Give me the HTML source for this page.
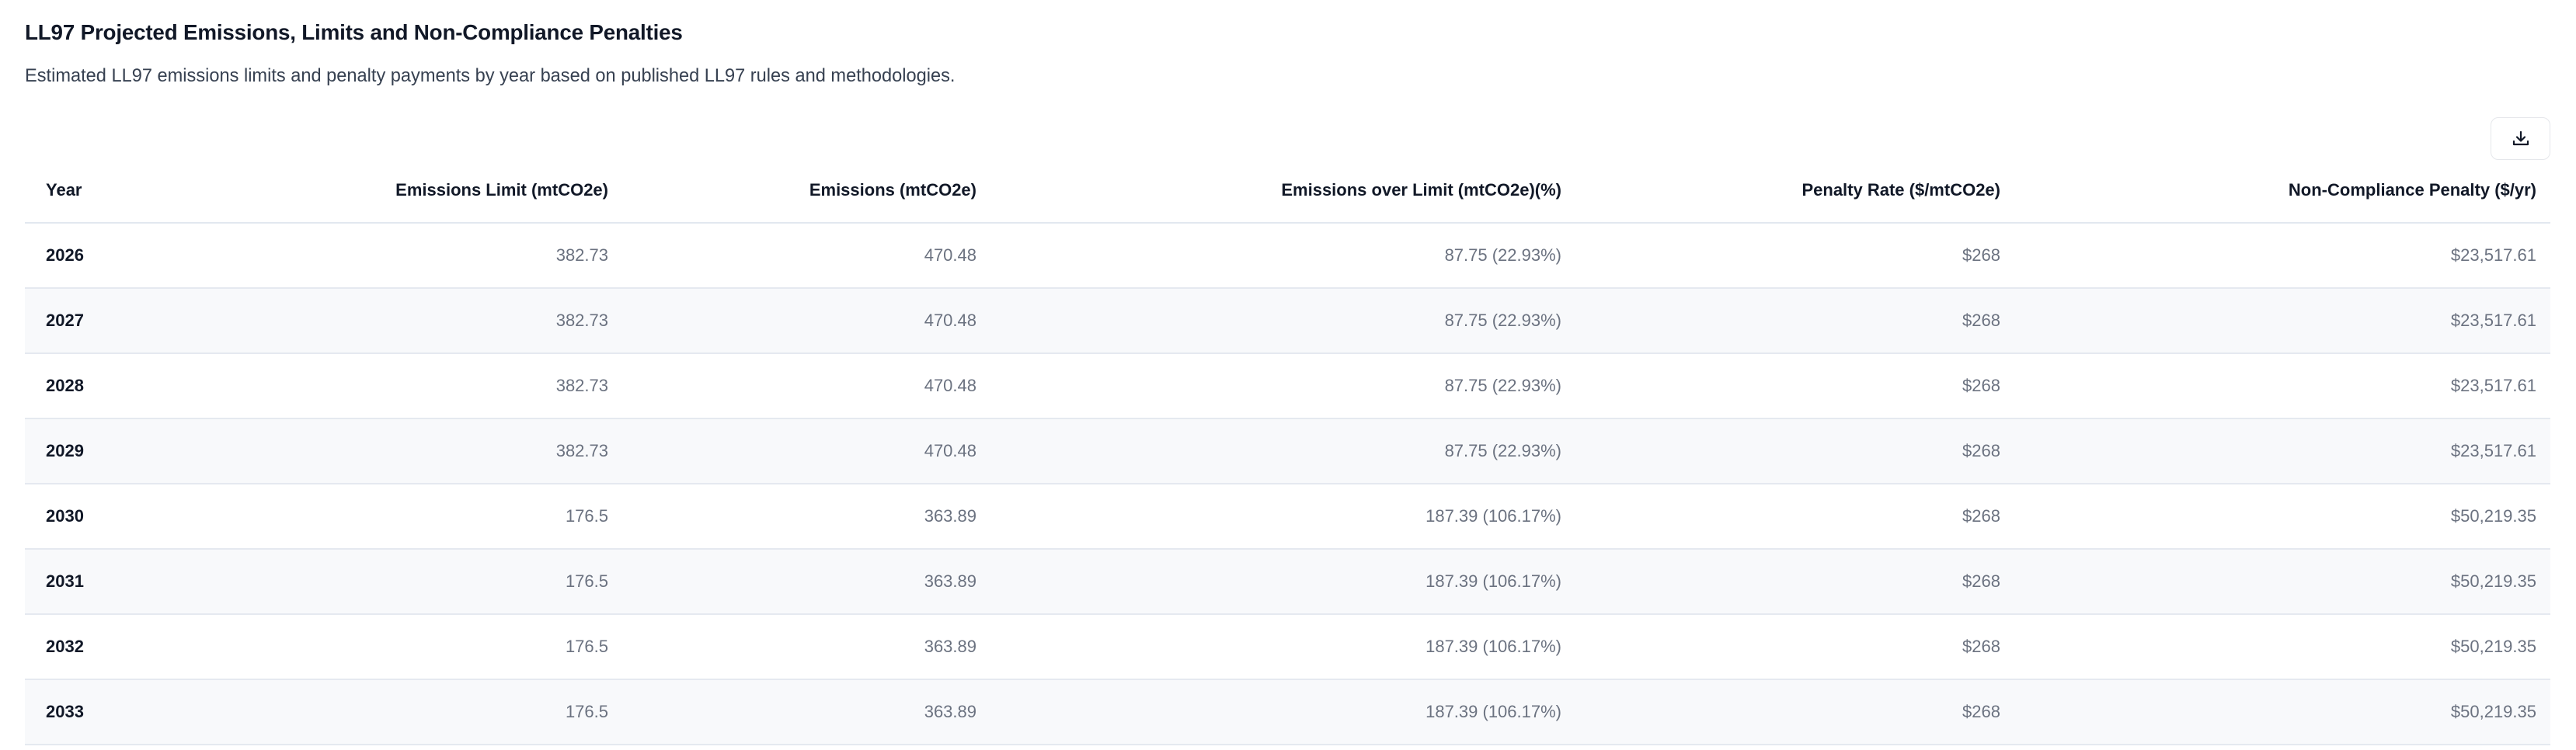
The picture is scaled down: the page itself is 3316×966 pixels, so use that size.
<!DOCTYPE html>
<html><head><meta charset="utf-8"><style>
body{margin:0;background:#fff;width:3316px;height:966px;overflow:hidden;font-family:"Liberation Sans",sans-serif;color:#111827;position:relative}
.t{position:absolute;left:32px;top:26px;font-size:27.8px;font-weight:bold;letter-spacing:-0.2px;white-space:nowrap}
.s{position:absolute;left:32px;top:85px;font-size:23.6px;color:#374151;white-space:nowrap}
.btn{position:absolute;left:3206px;top:151px;width:77px;height:55px;border:1px solid #e5e7eb;border-radius:10px;box-sizing:border-box;display:flex;align-items:center;justify-content:center}
table{position:absolute;left:32px;top:203px;width:3251px;border-collapse:collapse;font-size:22px}
td,th{height:84px;padding:0 18px 0 27px;box-sizing:border-box;text-align:right}
th{font-weight:bold;color:#111827;border-bottom:2px solid #e2e8f0}
td{color:#6b7280;border-bottom:2px solid #e5e9f0}
td:first-child,th:first-child{text-align:left;color:#111827;font-weight:bold}
tr:nth-child(odd) td{background:#f8f9fb}
</style></head><body>
<div class="t">LL97 Projected Emissions, Limits and Non-Compliance Penalties</div>
<div class="s">Estimated LL97 emissions limits and penalty payments by year based on published LL97 rules and methodologies.</div>
<div class="btn"><svg width="24" height="24" viewBox="0 0 24 24" fill="none" stroke="#111827" stroke-width="2.2" stroke-linecap="round" stroke-linejoin="round"><path d="M12 3v11M7 9.5l5 5 5-5M3 15v4h18v-4"/></svg></div>
<table>
<colgroup><col style="width:439px"><col style="width:330px"><col style="width:474px"><col style="width:753px"><col style="width:565px"><col></colgroup>
<tr><th>Year</th><th>Emissions Limit (mtCO2e)</th><th>Emissions (mtCO2e)</th><th>Emissions over Limit (mtCO2e)(%)</th><th>Penalty Rate ($/mtCO2e)</th><th>Non-Compliance Penalty ($/yr)</th></tr>
<tr><td>2026</td><td>382.73</td><td>470.48</td><td>87.75 (22.93%)</td><td>$268</td><td>$23,517.61</td></tr>
<tr><td>2027</td><td>382.73</td><td>470.48</td><td>87.75 (22.93%)</td><td>$268</td><td>$23,517.61</td></tr>
<tr><td>2028</td><td>382.73</td><td>470.48</td><td>87.75 (22.93%)</td><td>$268</td><td>$23,517.61</td></tr>
<tr><td>2029</td><td>382.73</td><td>470.48</td><td>87.75 (22.93%)</td><td>$268</td><td>$23,517.61</td></tr>
<tr><td>2030</td><td>176.5</td><td>363.89</td><td>187.39 (106.17%)</td><td>$268</td><td>$50,219.35</td></tr>
<tr><td>2031</td><td>176.5</td><td>363.89</td><td>187.39 (106.17%)</td><td>$268</td><td>$50,219.35</td></tr>
<tr><td>2032</td><td>176.5</td><td>363.89</td><td>187.39 (106.17%)</td><td>$268</td><td>$50,219.35</td></tr>
<tr><td>2033</td><td>176.5</td><td>363.89</td><td>187.39 (106.17%)</td><td>$268</td><td>$50,219.35</td></tr>
</table>
</body></html>
